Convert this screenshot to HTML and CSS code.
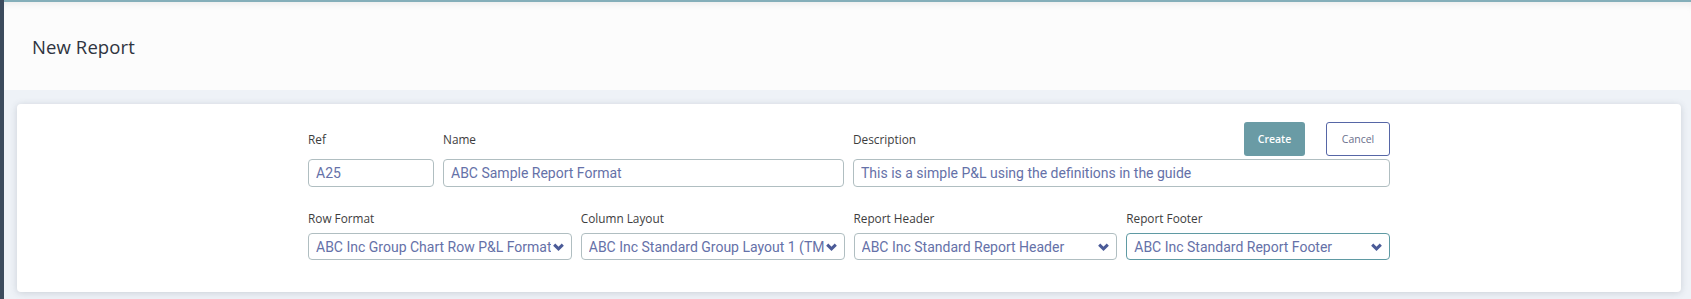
FILE: index.html
```html
<!DOCTYPE html>
<html lang="en">
<head>
    <meta charset="UTF-8">
    <meta name="viewport" content="width=device-width, initial-scale=1.0">
    <title>New Report</title>
    <link rel="stylesheet" href="styles.css">
</head>
<body>
    <div class="sidebar"></div>
    <div class="main">
        <div class="page-header">
            <h1>New Report</h1>
        </div>

        <div class="content">
            <div class="card">
                <form class="report-form" id="reportForm">
                    <div class="form-row row-top">
                        <div class="field">
                            <div class="field-head">
                                <label for="ref">Ref</label>
                            </div>
                            <input type="text" id="ref" value="A25">
                        </div>
                        <div class="field">
                            <div class="field-head">
                                <label for="name">Name</label>
                            </div>
                            <input type="text" id="name" value="ABC Sample Report Format">
                        </div>
                        <div class="field">
                            <div class="field-head">
                                <label for="description">Description</label>
                                <div class="actions">
                                    <button type="submit" class="create-btn">Create</button>
                                    <button type="button" class="cancel-btn">Cancel</button>
                                </div>
                            </div>
                            <input type="text" id="description" value="This is a simple P&amp;L using the definitions in the guide">
                        </div>
                    </div>

                    <div class="form-row row-bottom">
                        <div class="field">
                            <label for="rowFormat">Row Format</label>
                            <div class="select-wrap">
                                <select id="rowFormat">
                                    <option>ABC Inc Group Chart Row P&amp;L Format</option>
                                </select>
                                <svg class="chevron" width="11" height="8" viewBox="0 0 11 8"><path d="M1.2 1.6 L5.5 5.8 L9.8 1.6" fill="none" stroke="currentColor" stroke-width="3"/></svg>
                            </div>
                        </div>
                        <div class="field">
                            <label for="columnLayout">Column Layout</label>
                            <div class="select-wrap">
                                <select id="columnLayout">
                                    <option>ABC Inc Standard Group Layout 1 (TM)</option>
                                </select>
                                <svg class="chevron" width="11" height="8" viewBox="0 0 11 8"><path d="M1.2 1.6 L5.5 5.8 L9.8 1.6" fill="none" stroke="currentColor" stroke-width="3"/></svg>
                            </div>
                        </div>
                        <div class="field">
                            <label for="reportHeader">Report Header</label>
                            <div class="select-wrap">
                                <select id="reportHeader">
                                    <option>ABC Inc Standard Report Header</option>
                                </select>
                                <svg class="chevron" width="11" height="8" viewBox="0 0 11 8"><path d="M1.2 1.6 L5.5 5.8 L9.8 1.6" fill="none" stroke="currentColor" stroke-width="3"/></svg>
                            </div>
                        </div>
                        <div class="field">
                            <label for="reportFooter">Report Footer</label>
                            <div class="select-wrap">
                                <select id="reportFooter" class="focused">
                                    <option>ABC Inc Standard Report Footer</option>
                                </select>
                                <svg class="chevron" width="11" height="8" viewBox="0 0 11 8"><path d="M1.2 1.6 L5.5 5.8 L9.8 1.6" fill="none" stroke="currentColor" stroke-width="3"/></svg>
                            </div>
                        </div>
                    </div>
                </form>
            </div>
        </div>
    </div>
</body>
</html>
```

FILE: styles.css
```css
* {
    margin: 0;
    padding: 0;
    box-sizing: border-box;
}

html, body {
    height: 100%;
}

body {
    display: flex;
    background-color: #eef2f7;
    font-family: 'Open Sans', sans-serif;
    overflow: hidden;
}

.sidebar {
    width: 4px;
    flex-shrink: 0;
    background-color: #3c4b5d;
}

.main {
    flex: 1;
    border-top: 2px solid #84aeb9;
}

.page-header {
    height: 88px;
    display: flex;
    align-items: center;
    padding-left: 28px;
    background-color: #fcfcfc;
    box-shadow: inset 0 7px 8px -6px rgba(0,0,0,0.09);
}

h1 {
    font-size: 18.5px;
    font-weight: 400;
    color: #2f3440;
    letter-spacing: 0.1px;
}

.content {
    padding: 14px 10px 0 13px;
}

.card {
    background: white;
    border-radius: 4px;
    box-shadow: 0 1px 7px rgba(60,70,90,0.2);
    padding: 18px 0 32px;
}

.report-form {
    width: 1082px;
    margin: 0 auto;
}

.form-row {
    display: grid;
    column-gap: 9px;
}

.row-top {
    grid-template-columns: 126px 1fr 537px;
}

.row-bottom {
    grid-template-columns: repeat(4, 1fr);
    margin-top: 23px;
}

.field-head {
    height: 34px;
    display: flex;
    align-items: center;
    justify-content: space-between;
    margin-bottom: 3px;
}

label {
    display: block;
    font-size: 11.8px;
    line-height: 17px;
    color: #3d3d3d;
}

.row-bottom label {
    margin-bottom: 6px;
}

.actions {
    display: flex;
    gap: 21px;
}

button {
    height: 34px;
    border-radius: 3px;
    font-family: 'Open Sans', sans-serif;
    font-size: 10.5px;
    cursor: pointer;
}

.create-btn {
    width: 61px;
    background-color: #6a9ba5;
    border: none;
    color: white;
    font-weight: 600;
}

.cancel-btn {
    width: 64px;
    background-color: white;
    border: 1px solid #5666a6;
    color: #6b6f8c;
}

input, select {
    width: 100%;
    height: 28px;
    padding: 0 7px;
    border: 1px solid #b0bec1;
    border-radius: 4px;
    font-family: 'Roboto', sans-serif;
    font-size: 14px;
    color: #6571a8;
    background: white;
    outline: none;
}

.select-wrap {
    position: relative;
}

select {
    appearance: none;
    height: 27px;
    padding-right: 20px;
}

select.focused {
    border-color: #5f9aa3;
}

.chevron {
    position: absolute;
    right: 8px;
    top: 10px;
    color: #4b5b98;
    pointer-events: none;
}
```
